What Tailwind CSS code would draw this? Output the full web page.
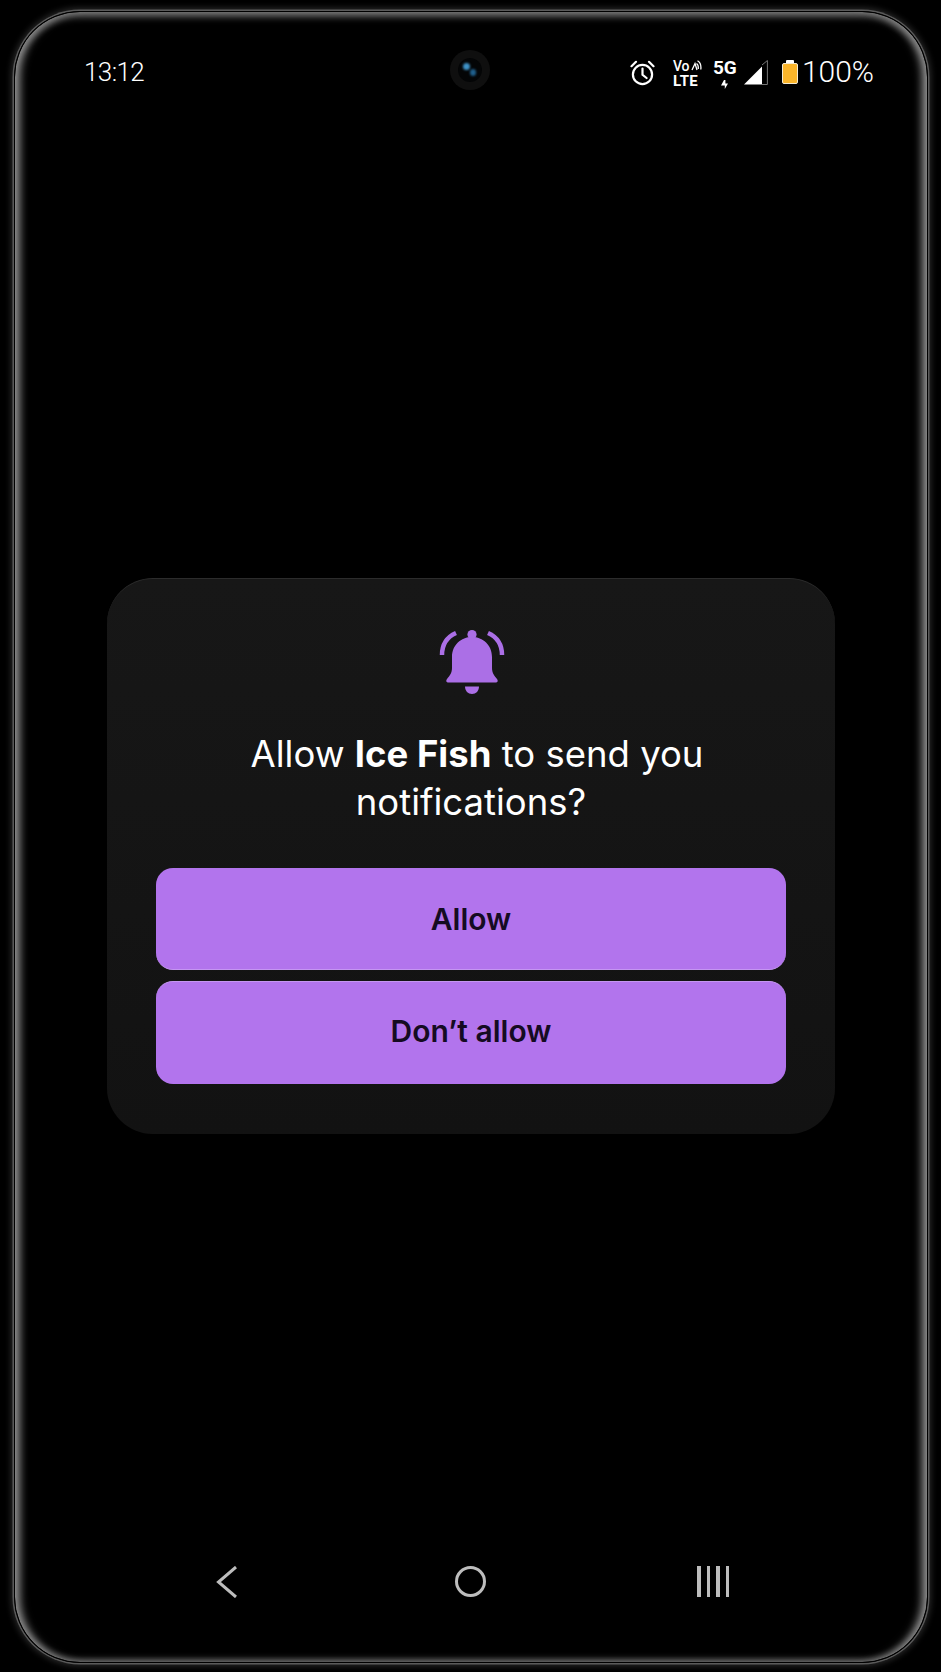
<!DOCTYPE html>
<html lang="en">
<head>
    <meta charset="UTF-8">
    <meta name="viewport" content="width=device-width, initial-scale=1.0">
    <title>Notification permission</title>
    <script src="https://cdn.jsdelivr.net/npm/@tailwindcss/browser@4"></script>
</head>
<body class="bg-black">
<div class="relative w-[941px] h-[1672px] bg-black overflow-hidden flex flex-col font-['Inter',sans-serif]">

    <!-- Phone frame -->
    <div class="absolute left-[14px] top-[11px] right-[13px] bottom-[9px] rounded-[66px] border-[1.5px] border-black shadow-[0_0_0_1.5px_#5a5a5a,0_0_6px_3px_#2a2a2a,inset_8px_0_8px_-3px_#8e8e8e,inset_-8px_0_8px_-3px_#8e8e8e,inset_0_8px_7px_-3px_#5c5c5c,inset_0_-5px_6px_-2px_#4a4a4a]"></div>

    <!-- Status bar -->
    <header class="relative h-[144px] pl-[84px] pr-[67px] pt-[57px] flex justify-between items-start text-white">
        <span class="font-['Roboto',sans-serif] font-light text-[26px] leading-[30px] tracking-[-0.6px]">13:12</span>

        <!-- Camera -->
        <div class="absolute left-[450px] top-[50px] w-[40px] h-[40px] rounded-full bg-[#0f0f0f] flex items-center justify-center">
            <div class="relative w-[24px] h-[24px] rounded-full bg-[#040506]">
                <div class="absolute left-[5px] top-[5px] w-[7px] h-[7px] rounded-full bg-[#3f93c8] blur-[1px]"></div>
                <div class="absolute left-[12px] top-[11px] w-[6px] h-[7px] rounded-full bg-[#1f5f8c] blur-[1px]"></div>
            </div>
        </div>

        <div class="flex items-start h-[32px]">
            <!-- Alarm -->
            <svg class="mt-[3px]" width="25" height="26" viewBox="0 0 25 26" fill="none" stroke="white" stroke-width="2.2" stroke-linecap="round">
                <circle cx="12.5" cy="14.5" r="9.6"/>
                <path d="M12.5 8.5V14.8L16.6 18"/>
                <path d="M1.5 6.2L6 1.8M23.5 6.2L19 1.8"/>
            </svg>

            <!-- VoLTE -->
            <div class="ml-[18px] mt-[2px] w-[29px] flex flex-col font-['Roboto',sans-serif] font-medium leading-none">
                <div class="flex items-center h-[13px]">
                    <span class="text-[14px]">Vo</span>
                    <svg class="ml-[1px]" width="11" height="11" viewBox="0 0 11 11" fill="none" stroke="white" stroke-width="1.3">
                        <path d="M1 10L4 3.5L6 10"/>
                        <path d="M5.5 3.5C7 4.5 7.5 6.5 7.3 9"/>
                        <path d="M6.5 0.8C9 2.2 10.3 5.5 9.8 9.5"/>
                    </svg>
                </div>
                <span class="text-[15px] mt-[2px] font-bold tracking-[0.3px]">LTE</span>
            </div>

            <!-- 5G -->
            <div class="ml-[11px] mt-[1px] w-[24px] flex flex-col items-center font-['Roboto',sans-serif] font-bold leading-none">
                <span class="text-[19px]">5G</span>
                <svg class="mt-[3px]" width="7" height="9" viewBox="0 0 7 9" fill="white"><path d="M3 0H4.4V3.4H7L3.8 9V5.4H0Z"/></svg>
            </div>

            <!-- Signal -->
            <svg class="ml-[7px] mt-[3px]" width="24" height="25" viewBox="0 0 24 25">
                <path d="M0 24.5L18 6.5V24.5Z" fill="white"/>
                <path d="M18 5L23.4 0.5V24.5H18" fill="none" stroke="#777" stroke-width="1"/>
            </svg>

            <!-- Battery -->
            <div class="ml-[14px] mt-[3px] flex flex-col items-center">
                <div class="w-[8px] h-[3px] bg-white rounded-t-[1px]"></div>
                <div class="w-[16px] h-[21px] rounded-[2px] bg-[#fbb52a] border-[1.5px] border-[#f4ead2]"></div>
            </div>

            <span class="ml-[4px] font-['Roboto',sans-serif] font-light text-[30px] leading-[30px]">100%</span>
        </div>
    </header>

    <!-- Dialog -->
    <main class="flex-1 pt-[434px]">
        <div class="ml-[107px] w-[728px] h-[556px] rounded-[46px] bg-gradient-to-b from-[#171717] to-[#121212] border-t border-[#2c2c2c] flex flex-col items-center">
            <svg class="mt-[49px]" width="70" height="70" viewBox="35 18 70 70" fill="#ab6fe6">
                <circle cx="71" cy="24.5" r="4.6"/>
                <path d="M71 27C60 27 51 35 51 47L51 58C51 63 48.5 66 46 69C44.5 71 45.5 72.5 47.5 72.5L94.5 72.5C96.5 72.5 97.5 71 96 69C93.5 66 91 63 91 58L91 47C91 35 82 27 71 27Z"/>
                <path d="M64 76.5L78 76.5C78 81 75 84 71 84C67 84 64 81 64 76.5Z"/>
                <path d="M55 23C46 27 41 35 41 45M87 23C96 27 101 35 101 45" fill="none" stroke="#ab6fe6" stroke-width="4.5"/>
            </svg>
            <h1 class="mt-[32px] w-[560px] text-center text-white text-[36.5px] leading-[48px]">
                <span class="block pl-[12px]">Allow <b class="font-bold">Ice Fish</b> to send you</span>
                <span class="block">notifications?</span>
            </h1>
            <div class="mt-[42px] w-[630px] flex flex-col gap-[11px]">
                <button class="h-[102px] pt-[2px] rounded-[17px] bg-[#b274ed] border-b border-[#c596f2] text-[#150b22] text-[30px] font-semibold">Allow</button>
                <button class="h-[103px] pb-[3px] rounded-[17px] bg-[#b274ed] border-t border-[#c596f2] text-[#150b22] text-[30px] font-semibold">Don’t allow</button>
            </div>
        </div>
    </main>

    <!-- Navigation bar -->
    <nav class="h-[128px] relative">
        <div class="absolute top-[22px] left-[216px] h-[32px] w-[22px]">
            <svg width="22" height="32" viewBox="0 0 22 32" fill="none" stroke="#bdbdbd" stroke-width="3"><path d="M20 1L2.5 16L20 31"/></svg>
        </div>
        <div class="absolute top-[22px] left-[455px] w-[31px] h-[31px] rounded-full border-[3.5px] border-[#bdbdbd]"></div>
        <div class="absolute top-[22px] left-[697px] flex gap-[6px]">
            <div class="w-[3.5px] h-[31px] bg-[#bdbdbd]"></div>
            <div class="w-[3.5px] h-[31px] bg-[#bdbdbd]"></div>
            <div class="w-[3.5px] h-[31px] bg-[#bdbdbd]"></div>
            <div class="w-[3.5px] h-[31px] bg-[#bdbdbd]"></div>
        </div>
    </nav>
</div>
</body>
</html>
